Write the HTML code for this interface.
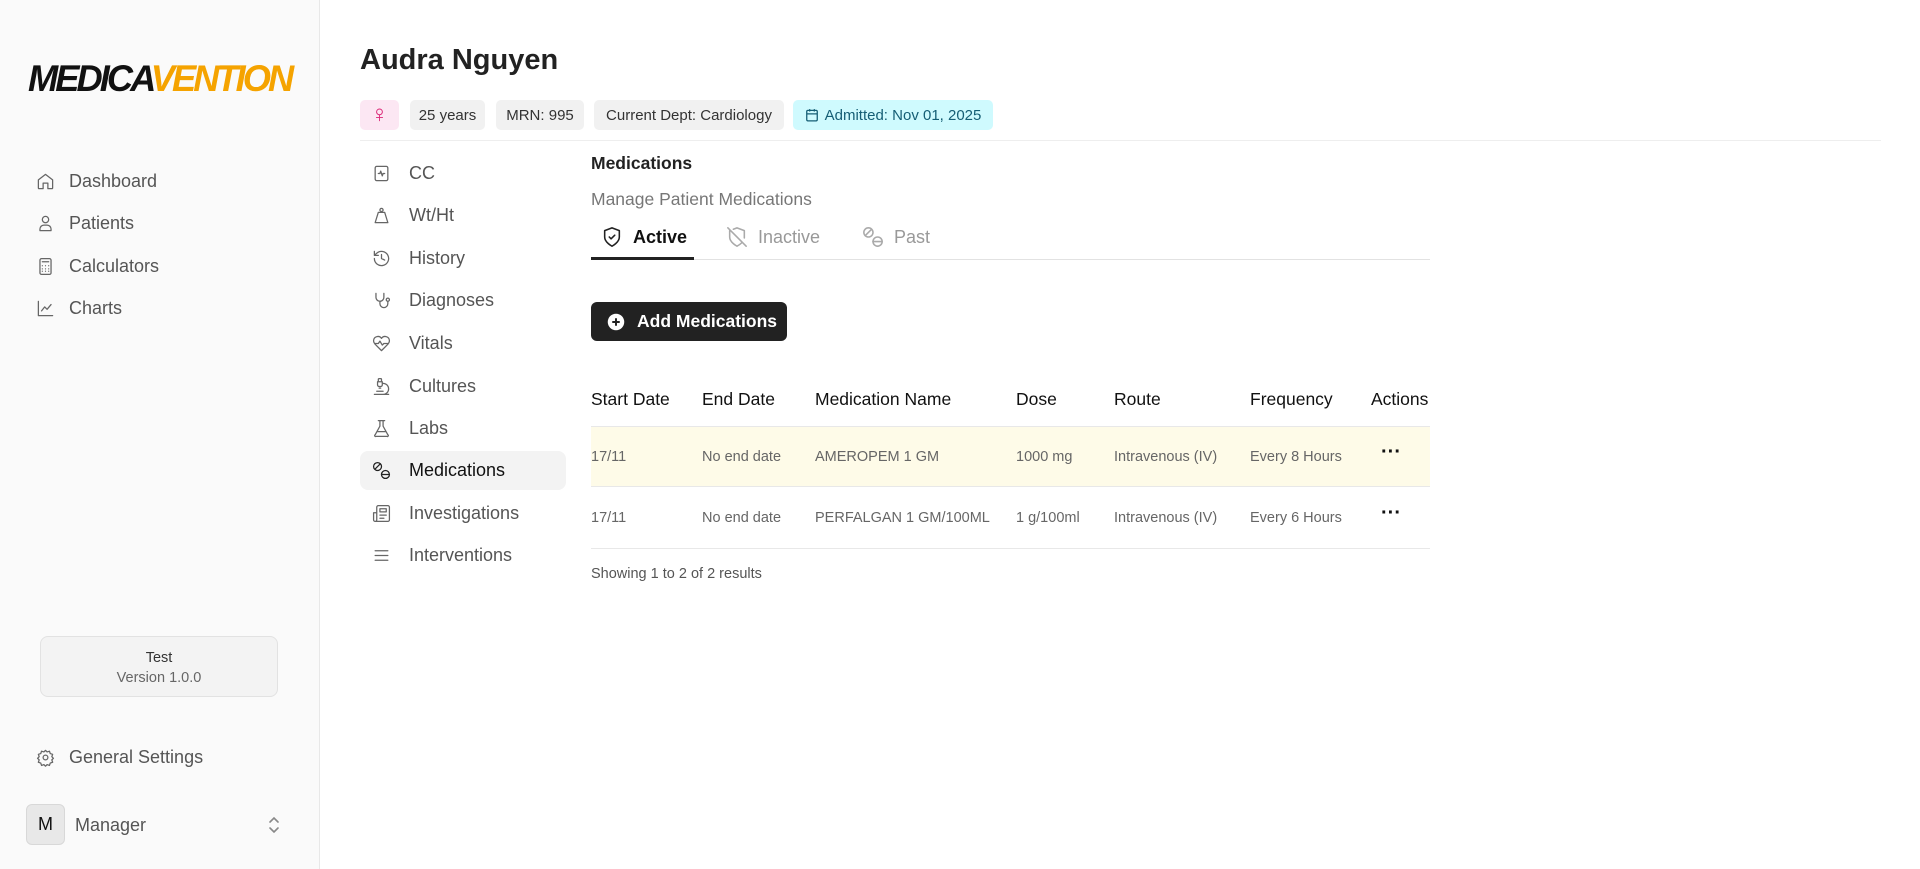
<!DOCTYPE html>
<html><head><meta charset="utf-8"><style>
*{box-sizing:border-box;margin:0;padding:0}
body{width:1920px;height:869px;overflow:hidden;background:#fff;font-family:"Liberation Sans",sans-serif;color:#222;position:relative}
.sb{position:absolute;left:0;top:0;width:320px;height:869px;background:#fafafa;border-right:1px solid #e8e8e8}
.a{position:absolute;white-space:nowrap}
.logo{left:28px;top:58px;font-size:37px;font-weight:bold;font-style:italic;letter-spacing:-3px;transform:scaleX(.98);transform-origin:left}
.nav{font-size:18px;color:#555;display:flex;align-items:center}
.nav svg{width:19px;height:19px;margin-right:14px;stroke:#666;fill:none;stroke-width:1.6;stroke-linecap:round;stroke-linejoin:round}
.badge{top:100px;height:30px;border-radius:5px;background:#f1f1f1;font-size:15px;color:#333;display:flex;align-items:center;justify-content:center}
.sub{left:372px;font-size:18px;color:#555;display:flex;align-items:center;height:40px}
.sub svg{width:19px;height:19px;margin-right:18px;stroke:#666;fill:none;stroke-width:1.6;stroke-linecap:round;stroke-linejoin:round}
.th{top:389px;font-size:17.5px;color:#111}
.td{font-size:14.5px;color:#666}
.tab{top:226px;font-size:18px;display:flex;align-items:center}
.tab svg{width:22px;height:22px;margin-right:10px;fill:none;stroke-width:1.7;stroke-linecap:round;stroke-linejoin:round}
</style></head><body>
<div class="sb"></div>
<div class="a logo"><span style="color:#111">MEDICA</span><span style="color:#f5a300">VENTION</span></div>

<div class="a nav" style="left:36px;top:171px"><svg viewBox="0 0 24 24"><path d="M3 10l9-7 9 7v10a1 1 0 0 1-1 1h-5v-7H9v7H4a1 1 0 0 1-1-1z"/></svg>Dashboard</div>
<div class="a nav" style="left:36px;top:213px"><svg viewBox="0 0 24 24"><circle cx="12" cy="7" r="4"/><path d="M5 21v-2a5 5 0 0 1 5-5h4a5 5 0 0 1 5 5v2z"/></svg>Patients</div>
<div class="a nav" style="left:36px;top:256px"><svg viewBox="0 0 24 24"><rect x="5" y="2" width="14" height="20" rx="2"/><path d="M8 6h8M8 11h.01M12 11h.01M16 11h.01M8 15h.01M12 15h.01M16 15h.01M8 18h.01M12 18h.01M16 18h.01"/></svg>Calculators</div>
<div class="a nav" style="left:36px;top:298px"><svg viewBox="0 0 24 24"><path d="M3 3v18h18M7 15l4-5 3 3 5-6"/></svg>Charts</div>

<div class="a" style="left:40px;top:636px;width:238px;height:61px;border:1px solid #e2e2e2;border-radius:8px;background:#f3f3f3;text-align:center;font-size:14.5px;padding-top:11px;line-height:20px"><div style="color:#333">Test</div><div style="color:#666">Version 1.0.0</div></div>

<div class="a nav" style="left:36px;top:747px"><svg viewBox="0 0 24 24"><circle cx="12" cy="12" r="3"/><path d="M12 3l2 2 3-1 1 3 3 1-1 3 2 2-2 2 1 3-3 1-1 3-3-1-2 2-2-2-3 1-1-3-3-1 1-3-2-2 2-2-1-3 3-1 1-3 3 1z"/></svg>General Settings</div>
<div class="a" style="left:26px;top:804px;width:39px;height:41px;border:1px solid #d8d8d8;border-radius:6px;background:#e8e8e8;font-size:18px;display:flex;align-items:center;justify-content:center;color:#111">M</div>
<div class="a" style="left:75px;top:815px;font-size:18px;color:#555">Manager</div>
<svg class="a" style="left:267px;top:815px" width="14" height="20" viewBox="0 0 14 20" fill="none" stroke="#888" stroke-width="1.6" stroke-linecap="round"><path d="M3 7l4-4 4 4M3 13l4 4 4-4"/></svg>

<div class="a" style="left:360px;top:44px;font-size:29px;font-weight:600;color:#222">Audra Nguyen</div>
<div class="a badge" style="left:360px;width:39px;background:#fce7f3;color:#db2777;font-size:24px">♀</div>
<div class="a badge" style="left:410px;width:75px">25 years</div>
<div class="a badge" style="left:496px;width:88px">MRN: 995</div>
<div class="a badge" style="left:594px;width:190px">Current Dept: Cardiology</div>
<div class="a badge" style="left:793px;width:200px;background:#cffafe;color:#155e75"><svg width="14" height="14" viewBox="0 0 24 24" fill="none" stroke="#155e75" stroke-width="2.2" style="margin-right:6px"><rect x="3" y="4" width="18" height="18" rx="2"/><path d="M16 2v4M8 2v4M3 10h18"/></svg>Admitted: Nov 01, 2025</div>
<div class="a" style="left:360px;top:140px;width:1521px;height:1px;background:#eee"></div>

<div class="a" style="left:360px;top:451px;width:206px;height:39px;border-radius:8px;background:#f3f3f3"></div>
<div class="sub a" style="top:153px"><svg viewBox="0 0 24 24"><rect x="4" y="3" width="16" height="18" rx="2"/><path d="M8 12h2l1-3 2 6 1-3h2"/></svg>CC</div>
<div class="sub a" style="top:195px"><svg viewBox="0 0 24 24"><circle cx="12" cy="5" r="2"/><path d="M8 8h8l4 13H4z"/></svg>Wt/Ht</div>
<div class="sub a" style="top:238px"><svg viewBox="0 0 24 24"><path d="M3 12a9 9 0 1 0 3-6.7L3 8M3 3v5h5M12 7v5l4 2"/></svg>History</div>
<div class="sub a" style="top:280px"><svg viewBox="0 0 24 24"><path d="M5 3v5a5 5 0 0 0 10 0V3M10 13v3a5 5 0 0 0 10 0v-3"/><circle cx="20" cy="11" r="2"/></svg>Diagnoses</div>
<div class="sub a" style="top:323px"><svg viewBox="0 0 24 24"><path d="M19 14c1.5-1.5 3-3.2 3-5.5A5.5 5.5 0 0 0 12 5.5 5.5 5.5 0 0 0 2 8.5c0 2.3 1.5 4 3 5.5l7 7z"/><path d="M4 12h4l2-3 3 5 2-2h5"/></svg>Vitals</div>
<div class="sub a" style="top:366px"><svg viewBox="0 0 24 24"><path d="M6 18h8M3 22h18M14 22a7 7 0 1 0 0-14h-1M9 14h2M9 12a2 2 0 0 1-2-2V6h6v4a2 2 0 0 1-2 2zM12 6V3a1 1 0 0 0-1-1H9a1 1 0 0 0-1 1v3"/></svg>Cultures</div>
<div class="sub a" style="top:408px"><svg viewBox="0 0 24 24"><path d="M10 2v7L4 20a1 1 0 0 0 1 2h14a1 1 0 0 0 1-2l-6-11V2M8 2h8M7 16h10"/></svg>Labs</div>
<div class="sub a" style="top:450px;color:#111"><svg viewBox="0 0 24 24" style="stroke:#222"><circle cx="7" cy="7" r="5"/><path d="M4 10l6-6"/><circle cx="17" cy="17" r="5"/><path d="M12 17h10"/></svg>Medications</div>
<div class="sub a" style="top:493px"><svg viewBox="0 0 24 24"><path d="M4 22h16a2 2 0 0 0 2-2V4a2 2 0 0 0-2-2H8a2 2 0 0 0-2 2v16a2 2 0 0 1-4 0v-9h4M18 14h-8M15 18h-5M10 6h8v4h-8z"/></svg>Investigations</div>
<div class="sub a" style="top:535px"><svg viewBox="0 0 24 24"><path d="M4 6h16M4 12h16M4 18h16"/></svg>Interventions</div>

<div class="a" style="left:591px;top:153px;font-size:17.5px;font-weight:bold;color:#222">Medications</div>
<div class="a" style="left:591px;top:189px;font-size:17.5px;color:#777">Manage Patient Medications</div>
<div class="a tab" style="left:601px;color:#111;font-weight:bold"><svg viewBox="0 0 24 24" stroke="#222"><path d="M12 22s8-4 8-10V5l-8-3-8 3v7c0 6 8 10 8 10z"/><path d="M9 12l2 2 4-4"/></svg>Active</div>
<div class="a tab" style="left:726px;color:#999"><svg viewBox="0 0 24 24" stroke="#aaa"><path d="M20 13V5l-8-3-4 1.5M4 5v7c0 6 8 10 8 10s3-1.5 5.5-4M2 2l20 20"/></svg>Inactive</div>
<div class="a tab" style="left:862px;color:#999"><svg viewBox="0 0 24 24" stroke="#aaa"><circle cx="7" cy="7" r="5"/><path d="M4 10l6-6"/><circle cx="17" cy="17" r="5"/><path d="M12 17h10"/></svg>Past</div>
<div class="a" style="left:591px;top:259px;width:839px;height:1px;background:#e2e2e2"></div>
<div class="a" style="left:591px;top:257px;width:103px;height:3px;background:#222"></div>

<div class="a" style="left:591px;top:302px;width:196px;height:39px;border-radius:6px;background:#222;color:#fff;font-size:17.5px;font-weight:bold;display:flex;align-items:center;padding-left:16px"><svg width="18" height="18" viewBox="0 0 24 24" style="margin-right:12px"><circle cx="12" cy="12" r="11" fill="#fff"/><path d="M12 7v10M7 12h10" stroke="#222" stroke-width="2.6"/></svg>Add Medications</div>

<div class="a th" style="left:591px">Start Date</div>
<div class="a th" style="left:702px">End Date</div>
<div class="a th" style="left:815px">Medication Name</div>
<div class="a th" style="left:1016px">Dose</div>
<div class="a th" style="left:1114px">Route</div>
<div class="a th" style="left:1250px">Frequency</div>
<div class="a th" style="left:1371px">Actions</div>
<div class="a" style="left:591px;top:426px;width:839px;height:61px;background:#fefbe8;border-top:1px solid #e8e8e8;border-bottom:1px solid #e8e8e8"></div>
<div class="a" style="left:591px;top:548px;width:839px;height:1px;background:#e8e8e8"></div>
<div class="a td" style="left:591px;top:449px">17/11</div>
<div class="a td" style="left:702px;top:449px">No end date</div>
<div class="a td" style="left:815px;top:449px">AMEROPEM 1 GM</div>
<div class="a td" style="left:1016px;top:449px">1000 mg</div>
<div class="a td" style="left:1114px;top:449px">Intravenous (IV)</div>
<div class="a td" style="left:1250px;top:449px">Every 8 Hours</div>
<div class="a" style="left:1381px;top:441px;font-size:20px;font-weight:bold;color:#111">···</div>
<div class="a td" style="left:591px;top:510px">17/11</div>
<div class="a td" style="left:702px;top:510px">No end date</div>
<div class="a td" style="left:815px;top:510px">PERFALGAN 1 GM/100ML</div>
<div class="a td" style="left:1016px;top:510px">1 g/100ml</div>
<div class="a td" style="left:1114px;top:510px">Intravenous (IV)</div>
<div class="a td" style="left:1250px;top:510px">Every 6 Hours</div>
<div class="a" style="left:1381px;top:502px;font-size:20px;font-weight:bold;color:#111">···</div>
<div class="a" style="left:591px;top:566px;font-size:14.5px;color:#555">Showing 1 to 2 of 2 results</div>
</body></html>
